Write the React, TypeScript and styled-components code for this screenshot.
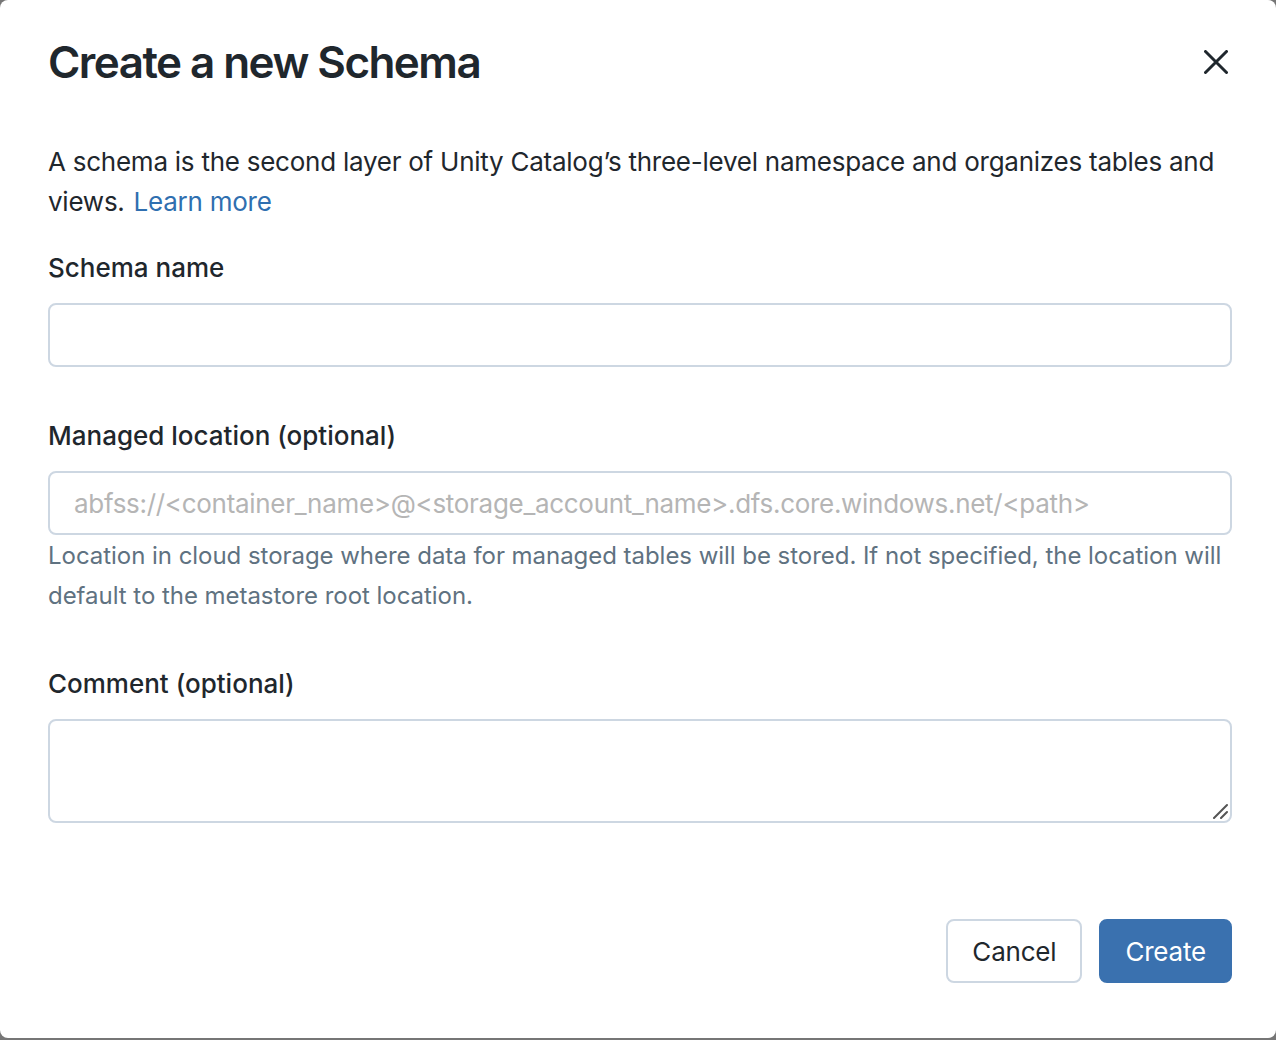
import styled, { createGlobalStyle } from 'styled-components';

const GlobalStyle = createGlobalStyle`
  html, body {
    margin: 0;
    padding: 0;
    background: #767676;
  }
  * {
    box-sizing: border-box;
  }
`;

const Modal = styled.div`
  width: 1276px;
  height: 1038px;
  background: #ffffff;
  border-radius: 8px;
  padding: 34px 44px 0 48px;
  font-family: Inter, "Noto Sans", sans-serif;
  color: #1f272d;
  display: flex;
  flex-direction: column;
`;

const Header = styled.div`
  display: flex;
  align-items: center;
  justify-content: space-between;
`;

const Title = styled.h1`
  margin: 0;
  font-size: 44px;
  line-height: 56px;
  font-weight: 600;
  letter-spacing: -1.55px;
`;

const CloseButton = styled.button`
  background: none;
  border: none;
  padding: 0;
  margin-right: 4px;
  display: flex;
  cursor: pointer;
  color: #1f272d;
`;

const Description = styled.p`
  margin: 52px 0 0;
  font-size: 26px;
  line-height: 40px;
  letter-spacing: -0.25px;
`;

const Link = styled.a`
  color: #2f6fb0;
  text-decoration: none;
  margin-left: 9px;
`;

const Field = styled.div<{ $gap: number }>`
  display: flex;
  flex-direction: column;
  margin-top: ${(p) => p.$gap}px;
`;

const Label = styled.label`
  font-size: 26px;
  line-height: 40px;
  font-weight: 500;
  margin-bottom: 15px;
`;

const Input = styled.input`
  height: 64px;
  width: 100%;
  border: 2px solid #cdd7e2;
  border-radius: 8px;
  padding: 0 24px;
  font-family: Inter, "Noto Sans", sans-serif;
  font-size: 26px;
  letter-spacing: -0.3px;
  color: #1f272d;
  outline: none;

  &::placeholder {
    color: #b5b5b5;
  }
`;

const TextAreaWrap = styled.div`
  position: relative;
`;

const TextArea = styled.textarea`
  height: 104px;
  width: 100%;
  border: 2px solid #cdd7e2;
  border-radius: 8px;
  padding: 12px 24px;
  font-family: Inter, "Noto Sans", sans-serif;
  font-size: 26px;
  resize: none;
  outline: none;
  display: block;
`;

const ResizeGrip = styled.svg`
  position: absolute;
  right: 4px;
  bottom: 4px;
  pointer-events: none;
`;

const Hint = styled.p`
  margin: 1px 0 0;
  font-size: 24px;
  line-height: 40px;
  letter-spacing: -0.04px;
  color: #5f7281;
`;

const Footer = styled.div`
  display: flex;
  justify-content: flex-end;
  gap: 17px;
  margin-top: 96px;
`;

const Button = styled.button<{ $primary?: boolean }>`
  height: 64px;
  padding: 0 24px;
  border-radius: 8px;
  font-family: Inter, "Noto Sans", sans-serif;
  font-size: 26px;
  letter-spacing: -0.2px;
  cursor: pointer;
  border: 2px solid ${(p) => (p.$primary ? '#3a71af' : '#cdd7e2')};
  background: ${(p) => (p.$primary ? '#3a71af' : '#ffffff')};
  color: ${(p) => (p.$primary ? '#ffffff' : '#1f272d')};
`;

function CloseIcon() {
  return (
    <svg width="24" height="24" viewBox="0 0 24 24" fill="none">
      <path d="M1.5 1.5 L22.5 22.5 M22.5 1.5 L1.5 22.5" stroke="currentColor" strokeWidth="3" strokeLinecap="round" />
    </svg>
  );
}

export default function App() {
  return (
    <>
      <GlobalStyle />
      <Modal>
        <Header>
          <Title>Create a new Schema</Title>
          <CloseButton aria-label="Close">
            <CloseIcon />
          </CloseButton>
        </Header>
        <Description>
          A schema is the second layer of Unity Catalog’s three-level namespace and organizes tables and
          views.<Link href="#">Learn more</Link>
        </Description>
        <Field $gap={26}>
          <Label>Schema name</Label>
          <Input />
        </Field>
        <Field $gap={49}>
          <Label>Managed location (optional)</Label>
          <Input placeholder="abfss://<container_name>@<storage_account_name>.dfs.core.windows.net/<path>" />
          <Hint>
            Location in cloud storage where data for managed tables will be stored. If not specified, the location will
            default to the metastore root location.
          </Hint>
        </Field>
        <Field $gap={48}>
          <Label>Comment (optional)</Label>
          <TextAreaWrap>
            <TextArea />
            <ResizeGrip width="16" height="16" viewBox="0 0 16 16">
              <path d="M2 15 L15 2 M9 15 L15 9" stroke="#555" strokeWidth="2" strokeLinecap="round" />
            </ResizeGrip>
          </TextAreaWrap>
        </Field>
        <Footer>
          <Button>Cancel</Button>
          <Button $primary>Create</Button>
        </Footer>
      </Modal>
    </>
  );
}
